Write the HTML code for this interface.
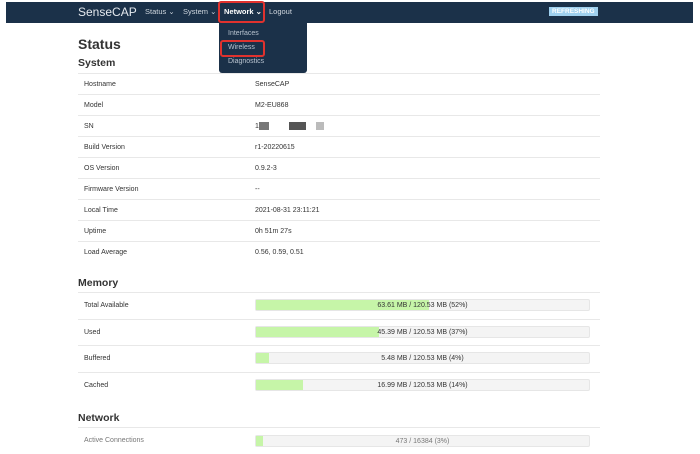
<!DOCTYPE html>
<html><head><style>
*{margin:0;padding:0;box-sizing:border-box}
body{width:700px;height:447px;overflow:hidden;background:#fff;font-family:"Liberation Sans",sans-serif;color:#333;position:relative}
.nav{position:absolute;left:6px;top:2px;width:687px;height:21px;background:#1b3149}
.nav span{position:absolute;top:5px;font-size:7.5px;color:#cfd6de}
.brand{left:72px!important;top:3px!important;font-size:12px!important;color:#e5e9ee!important}
.abs{position:absolute}
h1{position:absolute;left:78px;top:36px;font-size:14px;font-weight:bold;color:#333}
h2{position:absolute;left:78px;font-size:10.5px;font-weight:bold;color:#333}
.row{position:absolute;left:78px;width:522px;border-top:1px solid #e8e8e8;font-size:7px}
.row .k{position:absolute;left:6px}
.row .v{position:absolute;left:177px}
.bar{position:absolute;left:177px;width:335px;height:12px;background:#f4f4f4;border:1px solid #e6e6e6;border-radius:2px}
.bar i{position:absolute;left:0;top:0;bottom:0;background:#c6f5a8}
.bar b{position:absolute;left:0;right:0;top:2px;text-align:center;font-weight:normal;font-size:7px}
</style></head><body>
<div class="nav">
<span class="brand">SenseCAP</span>
<span style="left:139px">Status ⌄</span>
<span style="left:177px">System ⌄</span>
<span style="left:218px;color:#fff;font-weight:bold">Network ⌄</span>
<span style="left:263px">Logout</span>
<span style="left:543px;top:5px;background:#9fd0ee;color:#fff;font-weight:bold;font-size:6.5px;padding:1px 3px">REFRESHING</span>
</div>
<div class="abs" style="left:218px;top:1px;width:47px;height:22px;border:2px solid #e0322e;border-radius:3px"></div>
<div class="abs" style="left:219px;top:23px;width:88px;height:50px;background:#1b3149;border-radius:0 0 3px 3px;font-size:7px;color:#b8c3cf">
<div class="abs" style="left:9px;top:7px">Interfaces</div>
<div class="abs" style="left:9px;top:21px">Wireless</div>
<div class="abs" style="left:9px;top:35px">Diagnostics</div>
</div>
<div class="abs" style="left:220px;top:40px;width:45px;height:17px;border:2px solid #e0322e;border-radius:3px"></div>
<h1>Status</h1>
<h2 style="top:57px">System</h2>
<div class="row" style="top:73px;height:21px"><span class="k" style="top:7px">Hostname</span><span class="v" style="top:7px">SenseCAP</span></div>
<div class="row" style="top:94px;height:21px"><span class="k" style="top:7px">Model</span><span class="v" style="top:7px">M2-EU868</span></div>
<div class="row" style="top:115px;height:21px"><span class="k" style="top:7px">SN</span><span class="v" style="top:7px">1</span>
<div class="abs" style="left:181px;top:6px;width:10px;height:8px;background:#777"></div>
<div class="abs" style="left:211px;top:6px;width:17px;height:8px;background:#555"></div>
<div class="abs" style="left:238px;top:6px;width:8px;height:8px;background:#bbb"></div></div>
<div class="row" style="top:136px;height:21px"><span class="k" style="top:7px">Build Version</span><span class="v" style="top:7px">r1-20220615</span></div>
<div class="row" style="top:157px;height:21px"><span class="k" style="top:7px">OS Version</span><span class="v" style="top:7px">0.9.2-3</span></div>
<div class="row" style="top:178px;height:21px"><span class="k" style="top:7px">Firmware Version</span><span class="v" style="top:7px">--</span></div>
<div class="row" style="top:199px;height:21px"><span class="k" style="top:7px">Local Time</span><span class="v" style="top:7px">2021-08-31 23:11:21</span></div>
<div class="row" style="top:220px;height:21px"><span class="k" style="top:7px">Uptime</span><span class="v" style="top:7px">0h 51m 27s</span></div>
<div class="row" style="top:241px;height:21px"><span class="k" style="top:7px">Load Average</span><span class="v" style="top:7px">0.56, 0.59, 0.51</span></div>
<h2 style="top:277px">Memory</h2>
<div class="row" style="top:292px;height:27px"><span class="k" style="top:9px">Total Available</span><div class="bar" style="top:6px"><i style="width:52%"></i><b>63.61 MB / 120.53 MB (52%)</b></div></div>
<div class="row" style="top:319px;height:26px"><span class="k" style="top:9px">Used</span><div class="bar" style="top:6px"><i style="width:37%"></i><b>45.39 MB / 120.53 MB (37%)</b></div></div>
<div class="row" style="top:345px;height:27px"><span class="k" style="top:9px">Buffered</span><div class="bar" style="top:6px"><i style="width:4%"></i><b>5.48 MB / 120.53 MB (4%)</b></div></div>
<div class="row" style="top:372px;height:27px"><span class="k" style="top:9px">Cached</span><div class="bar" style="top:6px"><i style="width:14%"></i><b>16.99 MB / 120.53 MB (14%)</b></div></div>
<h2 style="top:412px">Network</h2>
<div class="row" style="top:427px;height:27px"><span class="k" style="top:9px;color:#777">Active Connections</span><div class="bar" style="top:7px"><i style="width:2%"></i><b style="color:#777">473 / 16384 (3%)</b></div></div>
</body></html>
